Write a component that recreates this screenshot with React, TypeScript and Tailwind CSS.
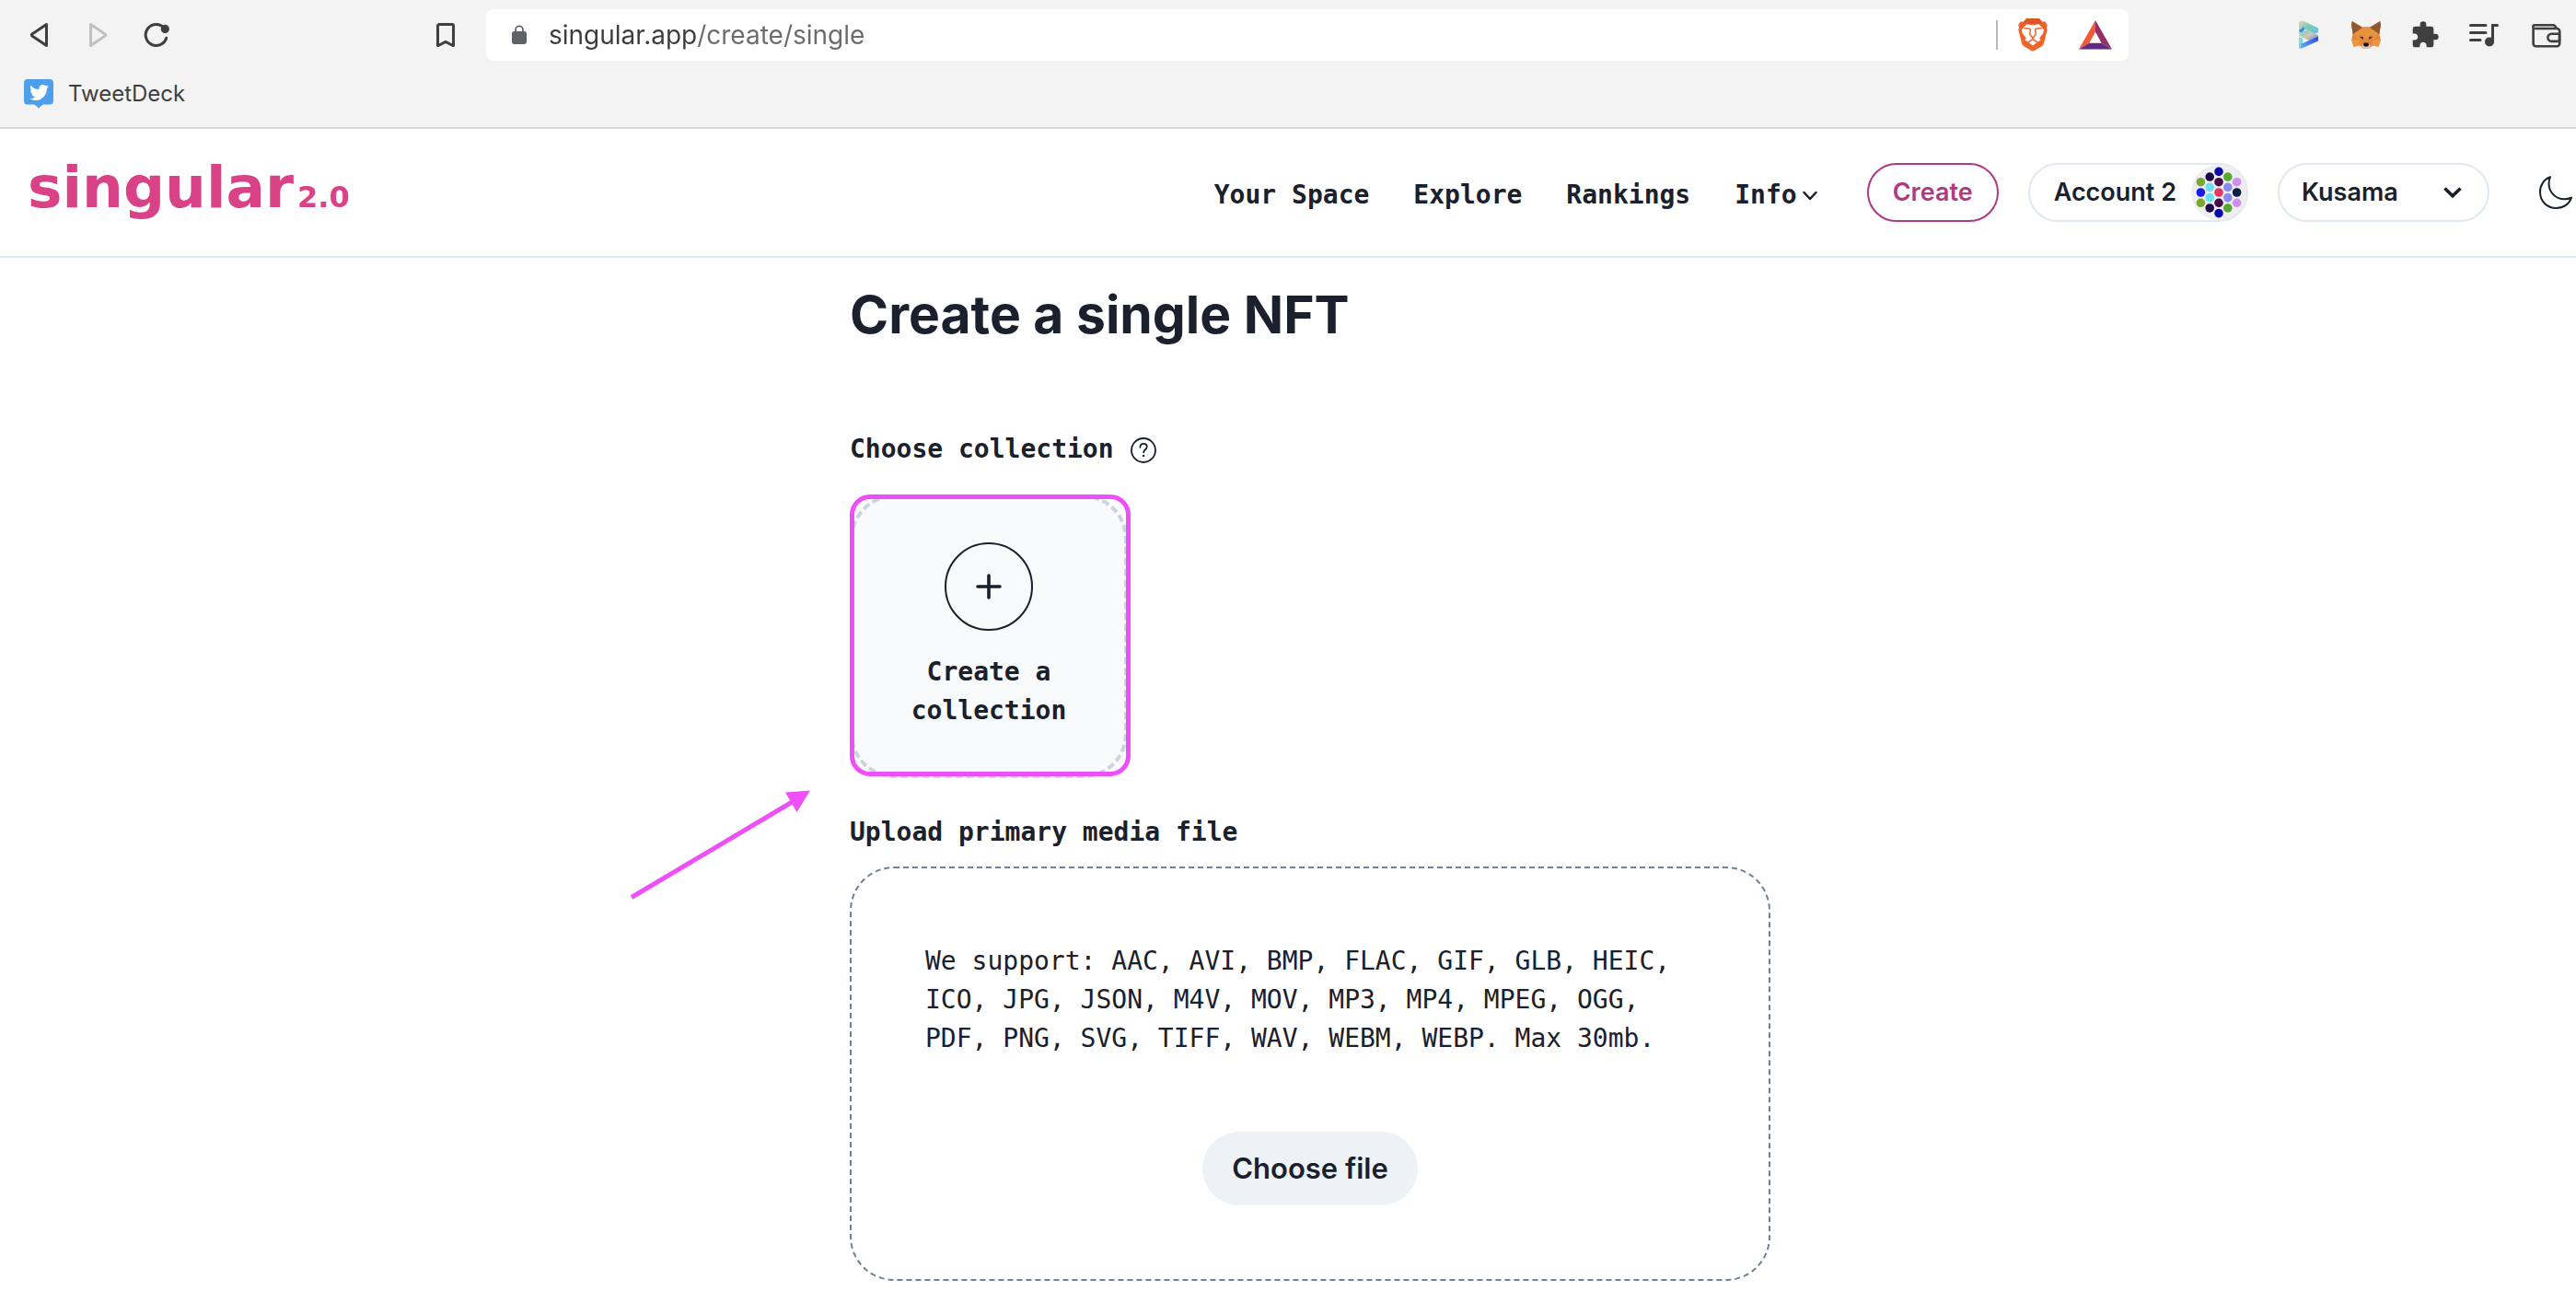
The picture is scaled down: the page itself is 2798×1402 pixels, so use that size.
import React from "react";
import { MdExtension } from "react-icons/md";
import { FaTwitter } from "react-icons/fa";

const MONO = "font-['DejaVu_Sans_Mono',monospace]";

function BackIcon({ flip = false }: { flip?: boolean }) {
  return (
    <svg viewBox="0 0 32 32" className="size-8" fill="none" strokeWidth="3" strokeLinejoin="round">
      {flip ? (
        <path d="M8.5 4.5v23L24.5 16.8v-1.6z" stroke="#c1c1c1" />
      ) : (
        <path d="M24.5 4.5v23L8.5 16.8v-1.6z" stroke="#3f3f3f" />
      )}
    </svg>
  );
}

function ReloadIcon() {
  return (
    <svg viewBox="0 0 32 32" className="size-8" fill="none">
      <path d="M24.5 8.6A11.5 11.5 0 1 0 26.7 19.3" stroke="#3f3f3f" strokeWidth="3" strokeLinecap="round" />
      <circle cx="25.3" cy="9.4" r="4.6" fill="#3f3f3f" />
    </svg>
  );
}

function BookmarkIcon() {
  return (
    <svg viewBox="0 0 32 32" className="size-8" fill="none" stroke="#3f3f3f" strokeWidth="3" strokeLinejoin="round">
      <path d="M9 4.5h14a1.5 1.5 0 0 1 1.5 1.5v21.5h-.6L16 23.4l-7.9 4.1h-.6V6A1.5 1.5 0 0 1 9 4.5z" />
    </svg>
  );
}

function LockIcon() {
  return (
    <svg viewBox="0 0 16 22" className="h-[22px] w-4" fill="none">
      <path d="M4 8V5.4a4 4 0 0 1 8 0V8" stroke="#5f6368" strokeWidth="1.8" />
      <rect x="0" y="7" width="16" height="14" rx="2.4" fill="#5f6368" />
    </svg>
  );
}

function BraveIcon() {
  return (
    <svg viewBox="0 0 32 36" className="h-9 w-8">
      <path d="M9 .6h14l3.4 3.2 3-.6 2.4 4.2-1 2.4.9 2.6-3.6 14.2c-.5 1.9-1.4 3-2.8 4L18 34.800Q16 36.400 14 34.800L6.700 30.600c-1.400-1-2.300-2.100-2.800-4L.3 12.400l.9-2.600-1-2.400 2.400-4.200 3 .6z" fill="#f1622a" />
      <path d="M9 0h14l3.500 4.200-3.700 1.900L16 5.200l-6.800.9-3.700-1.900z" fill="#dc5526" />
      <path d="M16 7.200l6.600-.9 5.600 6.100-1.200 4.200-3.800 4.600 1.400 2.400-3.400 2-3.400-2.200L16 22.600l-1.800.8-3.400 2.200-3.400-2 1.400-2.400L5 16.600l-1.200-4.200 5.600-6.100z" fill="#fff" />
      <path d="M6.500 10.800l5.200.1 1.800 1-.8 5.200 2.300 3.100L16 21l1-.8 2.300-3.100-.8-5.200 1.800-1 5.200-.1" fill="none" stroke="#f1622a" strokeWidth="1.500" />
      <path d="M16 20.800v2l-4.200 2.300M16 22.800l4.200 2.300" fill="none" stroke="#f1622a" strokeWidth="1.300" />
      <path d="M16 23.800l4.300 2.500-4.300 3.100-4.300-3.100z" fill="#fff" />
    </svg>
  );
}

function BatIcon() {
  return (
    <svg viewBox="0 0 36 32" className="h-8 w-9">
      <path d="M18 0L0 31.500l11.400-6.800L18 12.500z" fill="#f15a36" />
      <path d="M18 0l18 31.500-11.400-6.800L18 12.500z" fill="#952f65" />
      <path d="M0 31.500l11.400-6.800h13.200L36 31.500z" fill="#5e2a84" />
    </svg>
  );
}

function RibbonIcon() {
  return (
    <svg viewBox="0 0 32 32" className="size-8">
      <defs>
        <linearGradient id="ribbonTop" x1="0" y1="0" x2="1" y2="1">
          <stop offset="0" stopColor="#e6d3bd" />
          <stop offset="0.450" stopColor="#7ccbb4" />
          <stop offset="1" stopColor="#5cc3ee" />
        </linearGradient>
        <linearGradient id="ribbonMid" x1="0" y1="0" x2="1" y2="1">
          <stop offset="0" stopColor="#6fcfc4" />
          <stop offset="0.500" stopColor="#cfc8b2" />
          <stop offset="1" stopColor="#5a7af0" />
        </linearGradient>
        <linearGradient id="ribbonLow" x1="0" y1="1" x2="1" y2="0">
          <stop offset="0" stopColor="#63b4fa" />
          <stop offset="1" stopColor="#2f3fe0" />
        </linearGradient>
      </defs>
      <path d="M7 2l5-1.200V14l-5 1.500z" fill="#b9d0b4" />
      <path d="M7 2l5-1.200 16 7.700v4.800l-5 1.500L12 8.800z" fill="url(#ribbonTop)" />
      <path d="M7 11.500l5-4.500 1.500 3-4 3.500z" fill="#2f8fe0" />
      <path d="M12 12l4-2 12 6.500v3l-7 4L7 16.500z" fill="url(#ribbonMid)" />
      <path d="M7 18l4.500 1.500V29L7 31z" fill="#7adbe0" />
      <path d="M9 26l19-8.500v5L9 31z" fill="url(#ribbonLow)" />
    </svg>
  );
}

function FoxIcon() {
  return (
    <svg viewBox="0 0 32 32" className="size-8">
      <path d="M.8 1L12 7.200h8L31.200 1 32 5l-1.700 9 1.500 7.500-2.300 7.200-6.500-1.200-4 3.200h-6l-4-3.200-6.500 1.200L.2 21.500 1.700 14 0 5z" fill="#e2873a" />
      <path d="M.8 1L12 8.200 10.500 13l-8.800 2.200L0 5zM31.200 1L20 8.200l1.500 4.800 8.800 2.200L32 5z" fill="#90582f" />
      <path d="M2.500 14.500L12 8h8l9.500 6.500-4 5.500h-19z" fill="#e8913f" />
      <path d="M.2 21.500l8.300-.5 1 6.200-6.700 1.500zM31.800 21.500l-8.300-.5-1 6.200 6.700 1.500z" fill="#ee9440" />
      <path d="M8 17.500l5.200 1-.8 2.600zM24 17.500l-5.200 1 .8 2.600z" fill="#7a4a2c" />
      <path d="M10.500 17.400l2.600 1-.3 1.800-2.300-.9zM21.500 17.400l-2.600 1 .3 1.800 2.300-.9z" fill="#33343c" />
      <path d="M11 28l2.600-2.500h4.800L21 28l-2 2.700h-6z" fill="#d5cbc0" />
      <path d="M13.600 24.500h4.800l.6 2.600-1 1.300h-4l-1-1.300z" fill="#15161c" />
    </svg>
  );
}

function PlaylistIcon() {
  return (
    <svg viewBox="0 0 32 32" className="size-8" fill="none" stroke="#3f3f3f" strokeWidth="3" strokeLinecap="round">
      <path d="M1.500 5.500h16.500M1.500 13.500h16.500M1.500 21.500h10.500" />
      <path d="M25.500 23V5.500h5" />
      <circle cx="22" cy="23.400" r="5" fill="#3f3f3f" stroke="none" />
    </svg>
  );
}

function WalletIcon() {
  return (
    <svg viewBox="0 0 32 32" className="size-8" fill="none" stroke="#3f3f3f" strokeWidth="2.600" strokeLinejoin="round">
      <path d="M1.600 7.500v17.800a3 3 0 0 0 3 3h22.600a3 3 0 0 0 3-3V12a3 3 0 0 0-3-3H3.200a1.700 1.700 0 0 1 0-3.700h20.300a2 2 0 0 1 1.700 1l2 3" />
      <path d="M30 14.700h-8.500a4 4 0 0 0 0 8.200H30z" />
    </svg>
  );
}

function TweetDeckIcon() {
  return (
    <span className="grid">
      <svg viewBox="0 0 32 32" className="col-start-1 row-start-1 size-8">
        <path d="M4 0h24a4 4 0 0 1 4 4v19.500a4 4 0 0 1-4 4h-7.500L16 31.500l-4.500-4H4a4 4 0 0 1-4-4V4a4 4 0 0 1 4-4z" fill="#4d9eeb" />
      </svg>
      <FaTwitter className="col-start-1 row-start-1 mt-1 size-[21px] justify-self-center text-white" />
    </span>
  );
}

const DOTS: [number, number, string][] = [
  [0, -2, "#0a0aa8"], [0, -1, "#440c48"], [0, 0, "#e23a62"], [0, 1, "#440c48"], [0, 2, "#0a0aa8"],
  [-1, -1.5, "#200548"], [-1, -0.5, "#6ae0f2"], [-1, 0.5, "#6ae0f2"], [-1, 1.5, "#200548"],
  [1, -1.5, "#56a832"], [1, -0.5, "#8a8af2"], [1, 0.5, "#8a8af2"], [1, 1.5, "#56a832"],
  [-2, -1, "#7ba636"], [-2, 0, "#1a1aee"], [-2, 1, "#7ba636"],
  [2, -1, "#d48cf5"], [2, 0, "#0a1c48"], [2, 1, "#d48cf5"],
];

function Identicon() {
  return (
    <svg viewBox="-30 -30 60 60" className="size-[60px]">
      <circle r="30" fill="#eeeeee" />
      {DOTS.map(([x, y, color]) => (
        <circle key={`${x},${y}`} cx={x * 9.8} cy={y * 11.3} r="4.800" fill={color} />
      ))}
    </svg>
  );
}

function MoonIcon() {
  return (
    <svg viewBox="0 0 36 36" className="size-9" fill="none" stroke="#1a202c" strokeWidth="2" strokeLinejoin="round">
      <path d="M12 1.200C5.500 3.500 1 9.800 1 17.500 1 27.500 8.500 35 18.500 35c7.800 0 14.300-4.500 16.500-11.200-2.500 1-5 1.500-7.500 1.500C18 25.300 10.500 17.800 10.500 8.500c0-2.600.5-5 1.500-7.300z" />
    </svg>
  );
}

function HelpIcon() {
  return (
    <svg viewBox="0 0 28 28" className="size-7" fill="none" stroke="#1a202c" strokeWidth="1.800">
      <circle cx="14" cy="14" r="13" />
      <path d="M10.400 10.800c0-2.300 1.500-3.900 3.700-3.900 2.100 0 3.700 1.300 3.700 3.400 0 3-3.600 3-3.600 6" strokeLinecap="round" />
      <circle cx="14.100" cy="20" r="1.300" fill="#1a202c" stroke="none" />
    </svg>
  );
}

function BrowserBar() {
  return (
    <div className="border-b-2 border-[#d5d8dc] bg-[#f3f3f3] pt-2.5 pb-[18px] font-[Inter,sans-serif] text-[#3f3f3f]">
      <div className="flex h-14 items-center pr-4 pl-[26px]">
        <div className="flex gap-8">
          <button aria-label="Back"><BackIcon /></button>
          <button aria-label="Forward" disabled><BackIcon flip /></button>
          <button aria-label="Reload"><ReloadIcon /></button>
        </div>
        <button aria-label="Bookmark this page" className="ml-[282px]"><BookmarkIcon /></button>
        <div className="ml-7 flex h-14 flex-1 items-center rounded-lg bg-white pr-[18px] pl-7">
          <LockIcon />
          <input
            aria-label="Address"
            defaultValue="singular.app/create/single"
            className="ml-6 min-w-0 flex-1 bg-[linear-gradient(90deg,#3c3c3c_162px,#6b6b6b_162px)] bg-clip-text text-[28px] leading-9 text-transparent outline-none"
          />
          <span className="h-8 w-0.5 bg-[#b8b8b8]" />
          <button aria-label="Brave Shields" className="ml-[22px]"><BraveIcon /></button>
          <button aria-label="Brave Rewards" className="ml-[34px]"><BatIcon /></button>
        </div>
        <div className="ml-[178px] flex items-center gap-8 text-[#3f3f3f]">
          <button aria-label="Ribbon extension"><RibbonIcon /></button>
          <button aria-label="MetaMask"><FoxIcon /></button>
          <button aria-label="Extensions"><MdExtension className="size-8" /></button>
          <button aria-label="Playlist"><PlaylistIcon /></button>
          <button aria-label="Wallet" className="ml-1"><WalletIcon /></button>
        </div>
      </div>
      <div className="mt-[18px] flex pl-[26px]">
        <a href="#tweetdeck" className="flex items-center gap-4 text-2xl leading-9">
          <TweetDeckIcon />
          TweetDeck
        </a>
      </div>
    </div>
  );
}

function SiteHeader() {
  return (
    <header className="flex h-[140px] items-center justify-between border-b-2 border-[#e2e8f0] pr-1 pl-[30px]">
      <a href="#home" className="flex items-baseline gap-1 font-['DejaVu_Sans',sans-serif] font-bold text-[#d94286]">
        <span className="text-[63px] leading-[72px]">singular</span>
        <span className="text-[32px] leading-[72px]">2.0</span>
      </a>
      <div className="flex items-center">
        <nav className={`flex items-center gap-12 pt-1.5 text-[28px] leading-[42px] font-bold ${MONO}`}>
          <a href="#space">Your Space</a>
          <a href="#explore">Explore</a>
          <a href="#rankings">Rankings</a>
          <button className="flex items-center gap-1">
            Info
            <svg viewBox="0 0 20 20" className="size-5" fill="none" stroke="#1a202c" strokeWidth="2.500" strokeLinecap="round" strokeLinejoin="round">
              <path d="M3.500 7l6.500 7 6.500-7" />
            </svg>
          </button>
        </nav>
        <div className="ml-[52px] flex items-center gap-8 font-[Inter,sans-serif] text-[27px] leading-[42px] font-semibold">
          <button className="flex h-16 items-center rounded-full border-2 border-[#ae3a81] px-[26px] text-[#ae3a81]">Create</button>
          <button className="flex h-16 items-center gap-4 rounded-full border-2 border-[#e2e8f0] pl-[26px]">
            Account 2
            <Identicon />
          </button>
          <div className="relative">
            <select aria-label="Network" className="h-16 w-[230px] appearance-none rounded-full border-2 border-[#e2e8f0] bg-white px-6">
              <option>Kusama</option>
            </select>
            <svg viewBox="0 0 20 12" className="pointer-events-none absolute top-[26px] right-[30px] h-3 w-5" fill="none" stroke="#1a202c" strokeWidth="3.600">
              <path d="M1.500 1.500l8.500 8.300 8.500-8.300" />
            </svg>
          </div>
          <button aria-label="Toggle dark mode" className="ml-[22px]"><MoonIcon /></button>
        </div>
      </div>
    </header>
  );
}

function CollectionPicker() {
  return (
    <div className="relative mt-7">
      <button className="flex w-[302px] flex-col items-center gap-6 rounded-[48px] border-4 border-dashed border-[#cbd5e0] bg-[#f9fafc] p-12">
        <span className="flex size-24 items-center justify-center rounded-full border-2 border-[#1a202c]">
          <svg viewBox="0 0 28 28" className="size-7" stroke="#1a202c" strokeWidth="3.600" strokeLinecap="round">
            <path d="M14 2v24M2 14h24" />
          </svg>
        </span>
        <span>Create a collection</span>
      </button>
      <div className="pointer-events-none absolute top-0 left-0 h-[306px] w-[305px] rounded-[22px] border-[5px] border-[#ee4ff8]" />
      <svg viewBox="0 0 200 122" className="pointer-events-none absolute top-80 -left-60 h-[122px] w-[200px]">
        <path d="M3 117.500L184 10" stroke="#ee4ff8" strokeWidth="5" />
        <path d="M197 1.500l-27 2 12.500 21.500z" fill="#ee4ff8" />
      </svg>
    </div>
  );
}

export default function App() {
  return (
    <div className="min-h-screen bg-white text-[#1a202c]">
      <BrowserBar />
      <SiteHeader />
      <main className="pl-12">
        <form className={`mx-auto max-w-[1000px] pt-[26px] pb-2 text-[28px] leading-[42px] font-bold ${MONO}`} onSubmit={(e) => e.preventDefault()}>
          <h1 className="font-[Inter,sans-serif] text-[57px] leading-[72px] font-bold">Create a single NFT</h1>
          <div className="mt-[89px] flex items-center gap-[18px]">
            <h2>Choose collection</h2>
            <button type="button" aria-label="About collections" className="pt-0.5"><HelpIcon /></button>
          </div>
          <CollectionPicker />
          <h2 className="mt-[38px]">Upload primary media file</h2>
          <div className="mt-4 flex flex-col items-center gap-20 rounded-[48px] border-2 border-dashed border-[#718096] p-20">
            <p className="font-normal">
              We support: AAC, AVI, BMP, FLAC, GIF, GLB, HEIC, ICO, JPG, JSON, M4V, MOV, MP3, MP4, MPEG, OGG, PDF, PNG, SVG, TIFF, WAV, WEBM, WEBP. Max 30mb.
            </p>
            <button type="button" className="h-20 rounded-full bg-[#edf2f7] px-8 font-[Inter,sans-serif] text-[31px] font-semibold">
              Choose file
            </button>
          </div>
        </form>
      </main>
    </div>
  );
}
